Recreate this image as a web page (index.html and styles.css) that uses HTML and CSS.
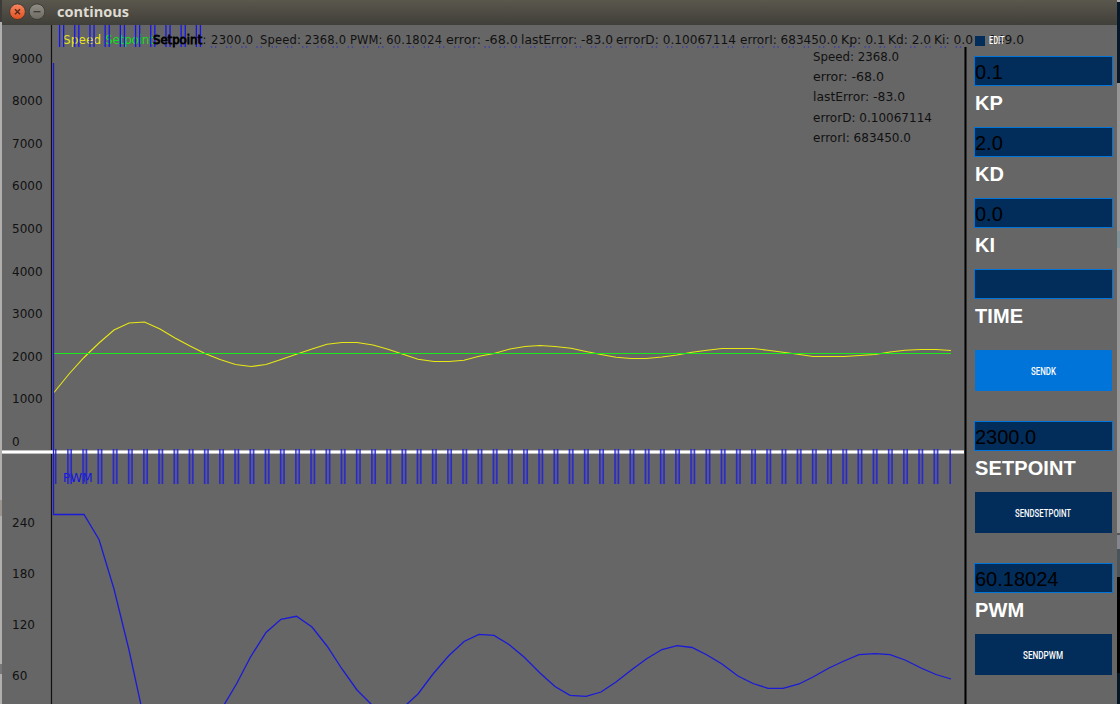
FILE: index.html
```html
<!DOCTYPE html>
<html lang="en">
<head>
<meta charset="utf-8">
<title>continous</title>
<link rel="stylesheet" href="styles.css">
</head>
<body>
<div class="desktop">
  <div class="edge-left"></div>
  <div class="window">
    <header class="titlebar">
      <svg class="controls" width="48" height="25" viewBox="2 0 48 25">
        <defs>
          <linearGradient id="close" x1="0" y1="0" x2="0" y2="1"><stop offset="0" stop-color="#f58661"/><stop offset="1" stop-color="#e2501f"/></linearGradient>
          <linearGradient id="min" x1="0" y1="0" x2="0" y2="1"><stop offset="0" stop-color="#918f86"/><stop offset="1" stop-color="#6c6a62"/></linearGradient>
        </defs>
        <circle cx="17.5" cy="11.7" r="7.8" fill="url(#close)" stroke="#35332e" stroke-width=".8"/>
        <path d="M15 9.2l5 5M20 9.2l-5 5" stroke="#51281b" stroke-width="1.4"/>
        <circle cx="37" cy="11.7" r="7.8" fill="url(#min)" stroke="#35332e" stroke-width=".8"/>
        <path d="M33.5 11.7h7" stroke="#3b3a35" stroke-width="1.3"/>
      </svg>
      <svg class="title" width="100" height="25"><text x="7" y="17" textLength="72" lengthAdjust="spacingAndGlyphs">continous</text></svg>
    </header>
    <main class="content">
      <svg class="plot" width="965" height="679" viewBox="2 25 965 679">
        <g class="axis">
          <text x="12" y="62.500">9000</text><text x="12" y="105">8000</text><text x="12" y="147.500">7000</text>
          <text x="12" y="190.400">6000</text><text x="12" y="233">5000</text><text x="12" y="275.500">4000</text>
          <text x="12" y="318">3000</text><text x="12" y="361">2000</text><text x="12" y="403.400">1000</text>
          <text x="12" y="446">0</text>
          <text x="12" y="527.400">240</text><text x="12" y="578">180</text><text x="12" y="629">120</text><text x="12" y="679.500">60</text>
        </g>
        <path class="axis-line" d="M51.500 25V704"/>
        <path class="halo" d="M2 452H965"/>
        <path class="divider" d="M2 452H965"/>
        <text class="speed" x="63" y="44" textLength="38">Speed</text>
        <text class="setpoint" x="105" y="44" textLength="49">Setpoint</text>
        <text class="pwm" x="63" y="481.500" textLength="29.500">PWM</text>
        <path class="tick-fill" d="M67 466.500H940"/>
        <path class="ticks" d="M67.100 466.500H940"/>
        <path class="tick-end" d="M55.700 449V484M950.200 449V484"/>
        <path class="ticks-top" d="M58.900 36H203"/>
        <path class="dots" d="M210.900 47H963"/>
        <g class="info">
          <text class="heavy" x="153" y="44" textLength="49" lengthAdjust="spacingAndGlyphs">Setpoint</text>
          <text x="202.500" y="44">:</text>
          <text x="211" y="44" textLength="42">2300.0</text>
          <text x="260" y="44" textLength="86">Speed: 2368.0</text>
          <text x="350" y="44" textLength="92">PWM: 60.18024</text>
          <text x="446" y="44" textLength="72" lengthAdjust="spacingAndGlyphs">error: -68.0</text>
          <text x="521" y="44" textLength="92" lengthAdjust="spacingAndGlyphs">lastError: -83.0</text>
          <text x="616" y="44" textLength="120" lengthAdjust="spacingAndGlyphs">errorD: 0.10067114</text>
          <text x="740" y="44" textLength="98" lengthAdjust="spacingAndGlyphs">errorI: 683450.0</text>
          <text x="841" y="44" textLength="44" lengthAdjust="spacingAndGlyphs">Kp: 0.1</text>
          <text x="888" y="44" textLength="43" lengthAdjust="spacingAndGlyphs">Kd: 2.0</text>
          <text x="934" y="44" textLength="39" lengthAdjust="spacingAndGlyphs">Ki: 0.0</text>
          <text x="989" y="44" textLength="35" lengthAdjust="spacingAndGlyphs">149.0</text>
          <text x="813" y="60.500" textLength="86" lengthAdjust="spacingAndGlyphs">Speed: 2368.0</text>
          <text x="813" y="81" textLength="71" lengthAdjust="spacingAndGlyphs">error: -68.0</text>
          <text x="813" y="101" textLength="92" lengthAdjust="spacingAndGlyphs">lastError: -83.0</text>
          <text x="813" y="121.500" textLength="119" lengthAdjust="spacingAndGlyphs">errorD: 0.10067114</text>
          <text x="813" y="142" textLength="98" lengthAdjust="spacingAndGlyphs">errorI: 683450.0</text>
        </g>
        <polyline class="speed-line" points="54,392.500 69,374 84,357.500 99,343 114,330 129,323 144.500,322 160,329 175,338 190,346 205,353.500 220,359.500 235.500,364.500 251,366.500 266,364.500 281,359.500 297,354 312,349 327,344.300 342,342.500 357,342.500 373,345 388,349.300 403,354.300 418,359.300 434,361.500 449,361.500 464,360.300 479,356.300 494,353.500 510,349 525,346.500 540,345.500 555,346.500 571,348.300 586,351.500 601,354.500 616,357.300 631,358.500 646,358.500 662,357 677,355 692,352.300 707,350.300 722,348.500 753,348.500 768,350.300 783,352.300 798,354.300 813,356.500 844,356.500 875,354.500 890,352 905,350.300 921,349.500 936,349.500 951,350.500"/>
        <path class="target-line" d="M54 353.500H951"/>
        <polyline class="pwm-line" points="53.500,63 53.500,514.500 84,514.500 99,539.500 114,589 129,650 141,705"/>
        <polyline class="pwm-line" points="224,705 237,683 250.500,657 266,632.500 281,619.300 296.500,616.300 312,627 327,646 342,669 357,690 372,705"/>
        <polyline class="pwm-line" points="406,705 418,694 433,674 448.500,656 464,641.500 479,634.400 494,635.400 509,644.500 524,657 540,673 555,686.500 570,695.400 586,696.400 601,692 616,682 632,669.500 647,658.500 662,649.500 677,645.700 692,647.500 707,655 722,664 738,676 753,683.500 768,688.300 783,688.300 799,684 813,677 829,668 844,661 859,654.700 875,653.700 890,654.700 905,660 921,668 936,674.500 951,679"/>
        <path class="right-shade" d="M965.500 47V704"/>
        <path class="right-line" d="M965.500 47V704"/>
      </svg>
      <aside class="panel">
        <div class="edit">
          <span class="check"></span>
          <svg class="tiny" width="18" height="11"><text x="0" y="9" textLength="15.500" lengthAdjust="spacingAndGlyphs">EDIT</text></svg>
        </div>
        <div class="cell"><div class="field">0.1</div><div class="label">KP</div></div>
        <div class="cell"><div class="field">2.0</div><div class="label">KD</div></div>
        <div class="cell"><div class="field">0.0</div><div class="label">KI</div></div>
        <div class="cell"><div class="field"></div><div class="label">TIME</div></div>
        <div class="cell shifted"><div class="button active"><svg class="tiny" width="26" height="12"><text x="0" y="9.500" textLength="25" lengthAdjust="spacingAndGlyphs">SENDK</text></svg></div></div>
        <div class="cell shifted"><div class="field">2300.0</div><div class="label">SETPOINT</div></div>
        <div class="cell shifted"><div class="button"><svg class="tiny" width="57" height="12"><text x="0" y="9.500" textLength="56" lengthAdjust="spacingAndGlyphs">SENDSETPOINT</text></svg></div></div>
        <div class="cell shifted"><div class="field">60.18024</div><div class="label">PWM</div></div>
        <div class="cell shifted"><div class="button"><svg class="tiny" width="41" height="12"><text x="0" y="9.500" textLength="40" lengthAdjust="spacingAndGlyphs">SENDPWM</text></svg></div></div>
      </aside>
    </main>
  </div>
  <div class="edge-right"></div>
</div>
</body>
</html>
```
FILE: styles.css
```css
* { box-sizing: border-box; }
body { margin: 0; overflow: hidden; font-family: "Liberation Sans", sans-serif; }
.desktop { display: grid; grid-template-columns: 2px 1115px 3px; width: 1120px; height: 704px; }
.edge-left { background: linear-gradient(#3c3b37 0 22px, #b0afad 22px 500px, #9b958e 500px 516px, #b0afad 516px 664px, #777 664px 674px, #b0afad 674px); }
.edge-right { background: linear-gradient(#aaa 0 2px, #06182a 2px 83px, #969696 83px 231px, #7e9297 231px 248px, #969696 248px 533px, #555 533px 535px, #85858d 535px 549px, #4b535a 549px 577px, #000 577px 673px, #071624 673px); }
.window { background: #666; display: flex; flex-direction: column; height: 704px; overflow: hidden; }
.titlebar { height: 25px; flex: none; display: flex; background: linear-gradient(#5a574d, #403f39); }
.title text { font: bold 14px "Open Sans", sans-serif; fill: #dfdbd2; }
.content { display: flex; height: 679px; }
.plot { flex: none; overflow: visible; font: 12px "DejaVu Sans", sans-serif; }
.axis { fill: #111; }
.info { fill: #111; font-size: 11.5px; }
.heavy { fill: #000; stroke: #000; stroke-width: .8; }
.speed { fill: #e5e51a; }
.setpoint { fill: #12dd22; }
.pwm { fill: #1414e6; }
.plot path, .plot polyline { fill: none; }
.axis-line { stroke: #111; stroke-width: 1.2; }
.halo { stroke: #aaa; stroke-width: 4; }
.divider { stroke: #fff; stroke-width: 2.4; }
.ticks { stroke: #1c1cd8; stroke-opacity: .75; stroke-width: 35; stroke-dasharray: 1.5 1.9 1.5 10.3; }
.tick-fill { stroke: #3030e0; stroke-opacity: .25; stroke-width: 35; stroke-dasharray: 5.100 10.100; }
.tick-end { stroke: #1c1cd8; stroke-opacity: .8; stroke-width: 1.6; }
.ticks-top { stroke: #1414f0; stroke-width: 22; stroke-dasharray: 1.3 2.8 1.3 9.8; }
.dots { stroke: #2424d8; stroke-width: 1; stroke-dasharray: 1.3 2.8 1.3 9.8; }
.plot .speed-line { stroke: #e8e814; stroke-width: 1.1; }
.target-line { stroke: #1bea1b; stroke-width: 1; }
.plot .pwm-line { stroke: #1a1ad8; stroke-width: 1.3; }
.right-shade { stroke: #3c3c3c; stroke-width: 3; }
.right-line { stroke: #000; stroke-width: 1.4; }
.panel { width: 139px; margin-left: 7px; margin-top: 10px; position: relative; }
.edit { height: 21px; display: flex; padding-left: 1px; align-items: flex-start; gap: 4px; }
.check { width: 10px; height: 10px; margin-top: 1px; background: #022d5a; }
.tiny { display: block; overflow: visible; }
.tiny text { font: 500 10.5px Roboto, sans-serif; fill: #fff; }
.cell { height: 71px; }
.cell.shifted { padding-top: 10px; }
.field { height: 30px; border: 1px solid #0074d9; background: #022d5a; color: #000; font-size: 20px; line-height: 31px; }
.label { padding: 6px 0 0 1px; color: #fff; font-weight: bold; font-size: 20px; line-height: 23px; letter-spacing: .1px; }
.button { height: 41px; width: 137px; margin-left: 1px; background: #022d5a; display: flex; align-items: center; justify-content: center; }
.button.active { background: #0074d9; }
```
